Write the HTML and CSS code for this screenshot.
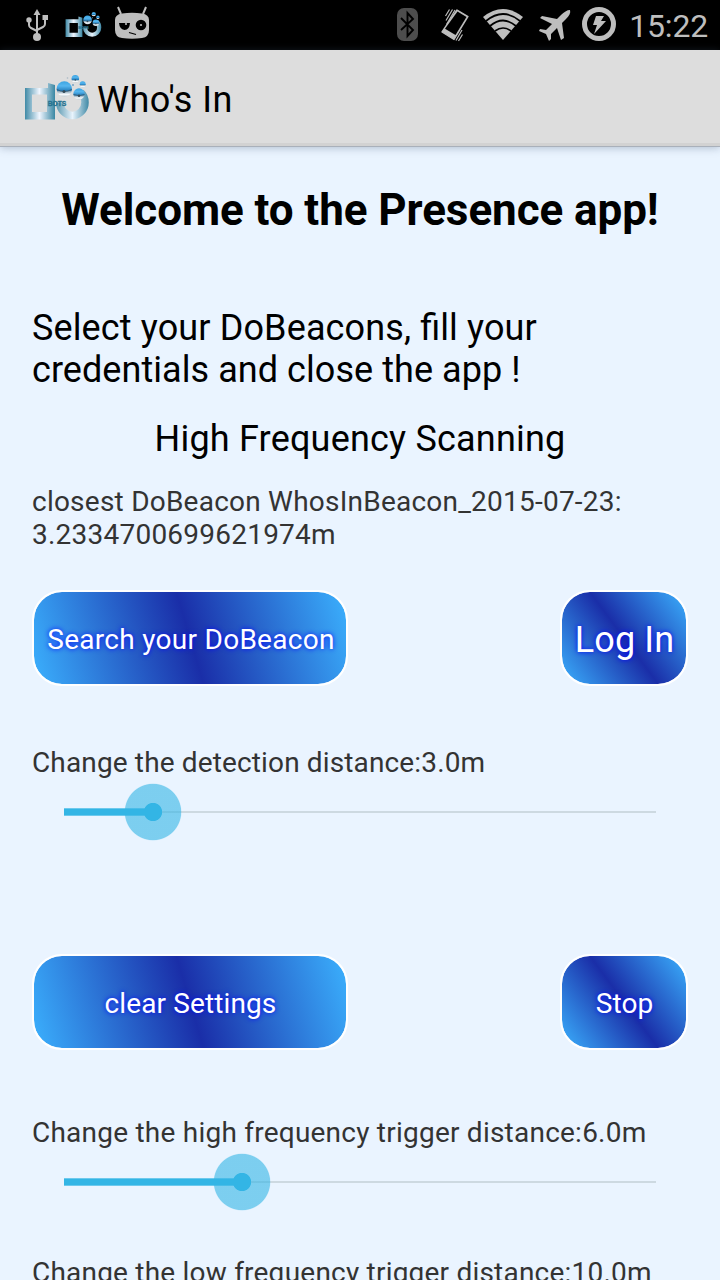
FILE: index.html
```html
<!DOCTYPE html>
<html lang="en">
<head>
<meta charset="utf-8">
<title>Who's In</title>
<link rel="stylesheet" href="styles.css">
</head>
<body>
<svg class="defs" width="0" height="0" aria-hidden="true">
  <defs>
    <linearGradient id="steel" x1="0" x2="1"><stop offset="0" stop-color="#408aa6"/><stop offset=".48" stop-color="#f0f6ff"/><stop offset="1" stop-color="#3a87a3"/></linearGradient>
    <linearGradient id="ring" gradientUnits="userSpaceOnUse" x1="32" x2="65" y1="0" y2="0"><stop offset="0" stop-color="#5796ae"/><stop offset=".5" stop-color="#e8f3fc"/><stop offset="1" stop-color="#3c87a4"/></linearGradient>
    <linearGradient id="ball" x1="0" y1="0" x2="0" y2="1"><stop offset="0" stop-color="#3ba4e2"/><stop offset=".3" stop-color="#56b6ef"/><stop offset=".6" stop-color="#2681c0"/><stop offset=".66" stop-color="#8ea9ba"/><stop offset=".85" stop-color="#f8fafc"/><stop offset="1" stop-color="#c3d0d8"/></linearGradient>
    <symbol id="logo" viewBox="0 0 66 48">
      <path fill="url(#steel)" fill-rule="evenodd" d="M1 13H24V8L31 10V44.500H1ZM8 19.500V37H23V19.500Z"/>
      <path fill="none" stroke="url(#ring)" stroke-width="7.500" d="M35.800 27.500A12.600 13 0 0 0 61 27.500Q61 21 57 17.500"/>
      <circle cx="40.300" cy="14" r="7.700" fill="url(#ball)"/><path d="M32.800 14.500Q40 18.500 47.800 14.500" fill="none" stroke="#345871" stroke-width=".9"/><circle cx="40" cy="16.500" r="1.500" fill="#344b59"/>
      <circle cx="55" cy="19" r="5.700" fill="url(#ball)"/><path d="M49.500 19.500Q55 22 60.500 19.500" fill="none" stroke="#345871" stroke-width=".8"/><circle cx="55" cy="20.700" r="1.200" fill="#344b59"/>
      <circle cx="51.300" cy="3.800" r="3.800" fill="url(#ball)"/><circle cx="51.300" cy="5" r=".8" fill="#344b59"/>
      <circle cx="58.700" cy="9.300" r="3" fill="url(#ball)"/>
      <circle cx="43.500" cy="3" r=".8" fill="#a8b9c3"/><circle cx="49" cy="10" r=".9" fill="#699ac0"/>
      <text x="23.700" y="31" textLength="18.600" lengthAdjust="spacingAndGlyphs" class="logo-text">BOTS</text>
    </symbol>
  </defs>
</svg>
<header class="status">
  <svg class="usb" viewBox="0 0 22 34"><g fill="none" stroke="#bebebe" stroke-width="2"><path d="M11 5V27M3 12V16Q3 18 5 19L11 22M19 9V15Q19 17 17 18L11 21"/></g><g fill="#bebebe"><path d="M11 0L14.500 6H7.500Z"/><circle cx="3" cy="11" r="2.700"/><path d="M16.500 6H22V11H16.500Z"/><circle cx="11" cy="28" r="4"/></g></svg>
  <svg class="mini-logo" viewBox="0 0 66 48"><use href="#logo"/></svg>
  <svg class="cyan" viewBox="0 0 36 34"><path d="M4 1L7 8M32 1L29 8" stroke="#bebebe" stroke-width="2"/><path fill="#bebebe" d="M8 7.500Q18 6 28 7.500Q35 8.500 35 14V24Q35 31 28 32Q18 33.500 8 32Q1 31 1 24V14Q1 8.500 8 7.500Z"/><path d="M5 17H16Q15.500 24 10.500 24Q5.500 23 5 17Z"/><circle cx="27" cy="19" r="5.300"/><circle cx="12" cy="18" r="1.100" fill="#bebebe"/><circle cx="27" cy="19" r="1.100" fill="#bebebe"/><path d="M15 26.500L22 28.500" stroke="#000" stroke-width="1.300"/></svg>
  <span class="spacer"></span>
  <svg class="bt" viewBox="0 0 21 33"><rect width="21" height="33" rx="7" fill="#4d4d4d"/><path d="M4 10L16 22L10.500 28V5L16 11L4 22" fill="none" stroke="#000" stroke-width="1.900"/></svg>
  <svg class="vibrate" viewBox="0 0 28 34"><path d="M16 2L27 8.500L13 31.500L1 24Z" fill="#bebebe" stroke="#bebebe" stroke-width="1.400" stroke-linejoin="round"/><path d="M16.500 3.500L25.500 9L14.500 27L4 20.800Z"/><path d="M4.500 8L8.500 1.500M5 12.500L11.500 1.500M5.500 16.500L14 2M15 32.500L21 22M17.500 33L21.500 26.500" stroke="#bebebe" stroke-width="1.200"/></svg>
  <svg class="wifi" viewBox="0 0 40 31"><path fill="#bebebe" d="M0 8Q20-8 40 8L20 31Z"/><path d="M3 12Q20-2 37 12M7 17Q20 6 33 17M12 22Q20 16 28 22" fill="none" stroke="#000" stroke-width="1.700"/></svg>
  <svg class="plane" viewBox="0 0 32 31"><path fill="#bebebe" d="M31 0C28 0 25 2 22 5L18 9L3 6L1 8L13 14L7 20L1 19L0 21L7 24L10 31L12 29V24L18 18L22 30L25 28L23 13L27 9C30 6 32 3 31 0Z"/></svg>
  <svg class="charge" viewBox="0 0 34 34"><circle cx="17" cy="17" r="14.500" fill="none" stroke="#bebebe" stroke-width="5"/><path fill="#bebebe" d="M14 9H22L19 14H24L12 27L15 18H11Z"/></svg>
  <span class="clock">15:22</span>
</header>
<div class="appbar"><svg class="app-logo" viewBox="0 0 66 48"><use href="#logo"/></svg><span class="app-name">Who's In</span></div>
<main class="content">
  <h1 class="title">Welcome to the Presence app!</h1>
  <p class="intro">Select your DoBeacons, <span class="joined">fi</span>ll your<br><span class="second-line">credentials and close the app !</span></p>
  <h2 class="mode">High Frequency Scanning</h2>
  <p class="closest">closest DoBeacon WhosInBeacon_2015-07-23:<br>3.2334700699621974m</p>
  <div class="actions"><button class="btn wide search">Search your DoBeacon</button><button class="btn narrow login">Log In</button></div>
  <div class="setting detection"><div>Change the detection distance:3.0m</div>
    <div class="slider"><span class="fill" style="width:89px"></span><span class="thumb"></span></div></div>
  <div class="actions"><button class="btn wide">clear Settings</button><button class="btn narrow">Stop</button></div>
  <div class="setting high"><div>Change the high frequency trigger distance:6.0m</div>
    <div class="slider"><span class="fill" style="width:178px"></span><span class="thumb"></span></div></div>
  <div class="low">Change the low frequency trigger distance:10.0m</div>
</main>
</body>
</html>
```

FILE: styles.css
```css
* { box-sizing: border-box; }
html, body { height: 1280px; overflow: hidden; }
body { margin: 0; width: 720px; background: #eaf4ff; color: #000; font-family: Roboto, sans-serif; display: flex; flex-direction: column; }
svg { display: block; flex: none; }
h1, h2, p { margin: 0; font-weight: 400; }
.defs { position: absolute; }
.logo-text { font: 900 6.3px "Liberation Sans", sans-serif; fill: #26728f; stroke: #26728f; stroke-width: .3px; }
.status { height: 50px; flex: none; background: #000; display: flex; align-items: flex-start; padding: 0 12px 0 26px; }
.usb { width: 22px; height: 34px; margin-top: 9px; }
.mini-logo { width: 37px; height: 27px; margin: 12px 0 0 17px; }
.cyan { width: 36px; height: 34px; margin: 6px 0 0 12px; }
.spacer { flex: 1; }
.bt { width: 21px; height: 33px; margin: 8px 23px 0 0; }
.vibrate { width: 28px; height: 34px; margin: 8px 14px 0 0; }
.wifi { width: 40px; height: 31px; margin: 9px 16px 0 0; }
.plane { width: 32px; height: 31px; margin: 10px 11px 0 0; }
.charge { width: 34px; height: 34px; margin: 7px 13px 0 0; }
.clock { color: #bebebe; font-size: 32px; line-height: 38px; margin-top: 7px; letter-spacing: -.2px; }
.appbar { height: 97px; flex: none; background: #ddd; border-bottom: 1px solid #a9b0ba; box-shadow: inset 0 -3px #d2d2d2, 0 1px 8px rgba(70, 90, 115, .35); display: flex; align-items: center; padding: 1px 0 0 24px; font-size: 36px; line-height: 42px; }
.app-logo { width: 66px; height: 48px; margin-right: 7px; }
.app-name { letter-spacing: .5px; padding-top: 2px; }
.content { flex: 1; min-height: 0; padding: 37px 32px 0; white-space: nowrap; font-size: 28px; line-height: 33px; color: #333; letter-spacing: .23px; }
.title { color: #000; font-size: 44px; line-height: 52px; font-weight: 700; text-align: center; letter-spacing: -.08px; }
.intro { margin-top: 71px; color: #000; font-size: 36px; line-height: 42px; letter-spacing: .13px; }
.joined { letter-spacing: 0; }
.second-line { letter-spacing: .06px; }
.mode { margin-top: 27px; color: #000; font-size: 36px; line-height: 42px; text-align: center; letter-spacing: .2px; }
.closest { margin-top: 25px; margin-bottom: 39px; }
.actions { display: flex; justify-content: space-between; }
.btn { height: 96px; padding: 2px 0 0 1px; border: 2px solid #fff; border-radius: 30px; color: #fff; font: 400 28px/33px Roboto, sans-serif; letter-spacing: .12px; text-shadow: 0 0 5px #00f; background-origin: padding-box; background-clip: padding-box; background-color: #fff; }
.wide { width: 316px; background-image: linear-gradient(73.6deg, #3bb0fd, #1a2ea8 50%, #3bb0fd); }
.narrow { width: 128px; background-image: linear-gradient(53.4deg, #3bb0fd, #1a2ea8 50%, #3bb0fd); }
.search { letter-spacing: .28px; padding-left: 2px; }
.login { font-size: 36px; line-height: 42px; padding-top: 3px; }
.detection { margin: 60px 0 110px; letter-spacing: .14px; }
.high { margin-top: 66px; }
.slider { height: 64px; margin: 1px 32px 0; display: flex; align-items: center; background: linear-gradient(#cdd9e1, #cdd9e1) 0 31px / 100% 2px no-repeat; }
.fill { height: 8px; background: linear-gradient(#6dc9ed 1px, #33b5e5 1px 7px, #6dc9ed 7px); }
.thumb { width: 58px; height: 58px; margin-left: -29px; border-radius: 50%; background: radial-gradient(circle, #33b5e5 8.7px, rgba(51, 181, 229, .6) 9.5px 27.7px, rgba(51, 181, 229, .12) 28.5px, transparent 29px); }
.low { margin-top: 42px; letter-spacing: .21px; }
```
